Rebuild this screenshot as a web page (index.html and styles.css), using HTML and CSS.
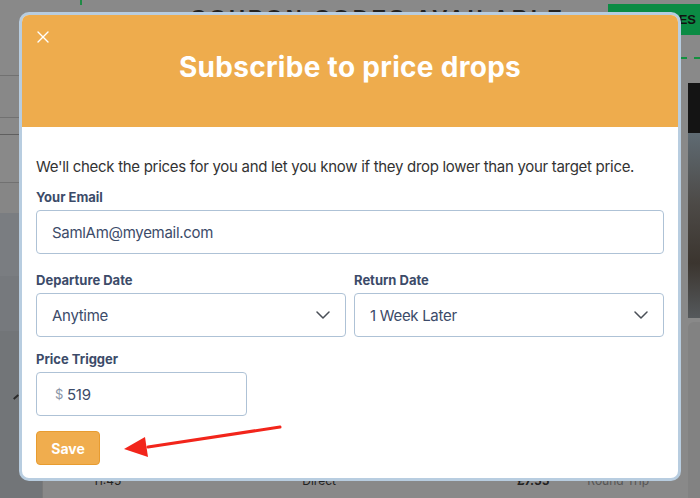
FILE: index.html
```html
<!doctype html>
<html lang="en">
  <head>
    <meta charset="UTF-8" />
    <meta name="viewport" content="width=device-width, initial-scale=1.0" />
    <title>Subscribe to price drops</title>
    <link rel="stylesheet" href="styles.css">
  </head>

  <body>
    <div class="page">
      <header class="topbar">
        <span class="tick"></span>
        <h1 class="promo">COUPON CODES AVAILABLE</h1>
        <a class="deal-btn">SEE PRICES</a>
      </header>
      <div class="content">
        <aside class="side">
          <div class="band b1"></div>
          <div class="band b2"></div>
          <div class="band b3"></div>
          <div class="band b4"><span class="round"></span></div>
          <div class="band b5"></div>
          <div class="band b6"></div>
          <div class="band b7"></div>
          <div class="band b8"><span class="mark"></span></div>
        </aside>
        <main class="results">
          <div class="result-row">
            <span>11:45</span>
            <span class="stops">Direct</span>
            <span class="price">£7.55</span>
            <span class="trip">Round Trip</span>
          </div>
        </main>
        <aside class="photo-col">
          <div class="dash"></div>
          <div class="photo"></div>
          <div class="card"></div>
        </aside>
      </div>
    </div>

    <div class="modal">
      <div class="modal-head">
        <button class="close" aria-label="Close">
          <svg width="12" height="12" viewBox="0 0 12 12" fill="none" stroke="white" stroke-width="1.4" stroke-linecap="round">
            <line x1="1" y1="1" x2="11" y2="11" />
            <line x1="11" y1="1" x2="1" y2="11" />
          </svg>
        </button>
        <h2>Subscribe to price drops</h2>
      </div>
      <form class="modal-body">
        <p class="intro">We'll check the prices for you and let you know if they drop lower than your target price.</p>

        <div class="field email-field">
          <label>Your Email</label>
          <div class="box">SamlAm@myemail.com</div>
        </div>

        <div class="field-row">
          <div class="field">
            <label>Departure Date</label>
            <div class="box select">
              <span>Anytime</span>
              <svg width="14" height="8" viewBox="0 0 14 8" fill="none" stroke="#4a4f57" stroke-width="1.5" stroke-linecap="round" stroke-linejoin="round">
                <polyline points="1 1 7 7 13 1" />
              </svg>
            </div>
          </div>
          <div class="field">
            <label>Return Date</label>
            <div class="box select">
              <span>1 Week Later</span>
              <svg width="14" height="8" viewBox="0 0 14 8" fill="none" stroke="#4a4f57" stroke-width="1.5" stroke-linecap="round" stroke-linejoin="round">
                <polyline points="1 1 7 7 13 1" />
              </svg>
            </div>
          </div>
        </div>

        <div class="field price-field">
          <label>Price Trigger</label>
          <div class="box price-box"><span class="currency">$</span>519</div>
        </div>

        <button type="button" class="save">Save</button>
      </form>
    </div>

    <svg class="arrow" width="170" height="40" viewBox="0 0 170 40">
      <line x1="160" y1="3" x2="28" y2="23" stroke="#f2251b" stroke-width="3" stroke-linecap="round" />
      <polygon points="4,25 25,13 28,33" fill="#f2251b" />
    </svg>
  </body>
</html>
```

FILE: styles.css
```css
:root {
  --orange: #eeac4d;
  --label: #3c4b69;
  --border: #aec2d6;
}

* {
  box-sizing: border-box;
  font-family: Inter, "Liberation Sans", sans-serif;
}

body {
  margin: 0;
  width: 700px;
  height: 498px;
  overflow: hidden;
  background-color: #898989;
}

/* dimmed page behind the modal */
.page {
  height: 498px;
  display: flex;
  flex-direction: column;
}

.topbar {
  height: 36px;
  display: flex;
  align-items: flex-start;
}

.tick {
  width: 2px;
  height: 5px;
  margin-left: 80px;
  background-color: #1f8a45;
}

.promo {
  margin: 7px 0 0 108px;
  font-family: "Liberation Sans", sans-serif;
  font-size: 22px;
  font-weight: 700;
  letter-spacing: 3px;
  color: #222;
  line-height: 22px;
}

.deal-btn {
  margin: 4px 0 0 auto;
  width: 92px;
  height: 31px;
  background-color: #0b8b44;
  color: #111;
  font-family: "Liberation Sans", sans-serif;
  font-weight: 700;
  font-size: 13px;
  display: flex;
  align-items: center;
  justify-content: flex-end;
  padding-right: 4px;
}

.content {
  flex: 1;
  display: grid;
  grid-template-columns: 42px 1fr 19px;
}

.side {
  display: flex;
  flex-direction: column;
  margin-top: -36px;
}

.band {
  border-bottom: 1px solid #717171;
}

.b1 { height: 76px; }
.b2 { height: 42px; background-color: #888; }
.b3 { height: 17px; border-bottom-color: #5f5f5f; }
.b4 { height: 48px; display: flex; align-items: center; justify-content: flex-end; }
.b5 { height: 30px; border: none; background-color: #868686; }
.b6 { height: 63px; border: none; background-color: #7a7d81; }
.b7 { height: 55px; border: none; background-color: #76797d; }
.b8 { flex: 1; border: none; background-color: #727578; position: relative; }

.round {
  width: 22px;
  height: 22px;
  border: 1px solid #6e6e6e;
  border-radius: 50%;
  margin-right: -6px;
}

.mark {
  position: absolute;
  left: 13px;
  top: 65px;
  width: 6px;
  height: 2px;
  background-color: #2a2a2a;
  transform: rotate(-40deg);
}

.results {
  display: flex;
  flex-direction: column;
  justify-content: flex-end;
  border-left: 1px solid #7a7a7a;
  padding-bottom: 11px;
}

.result-row {
  display: flex;
  height: 14px;
  align-items: flex-end;
  font-family: "Liberation Sans", sans-serif;
  font-size: 12px;
  color: #222;
  padding-left: 50px;
  line-height: 12px;
}

.result-row .stops {
  margin-left: 181px;
}

.result-row .price {
  margin-left: 181px;
  font-weight: 700;
}

.result-row .trip {
  margin-left: 38px;
  color: #555;
}

.photo-col {
  display: flex;
  flex-direction: column;
  padding-left: 7px;
}

.dash {
  height: 26px;
  margin-left: -7px;
  border-top: 2px dashed #12913f;
  margin-top: 21px;
}

.photo {
  height: 235px;
  background: linear-gradient(#141414 0 50px, #5f6b73 50px, #4d4a47 120px, #3b352f 180px, #55595c);
}

.card {
  flex: 1;
  margin-top: 4px;
  background-color: #828282;
  border-top-left-radius: 6px;
}

/* modal */
.modal {
  position: absolute;
  left: 19px;
  top: 12px;
  width: 662px;
  height: 469px;
  border: 3px solid #b8cde0;
  border-radius: 10px;
  background-color: white;
  overflow: hidden;
}

.modal-head {
  height: 112px;
  background-color: var(--orange);
  padding-top: 35px;
  position: relative;
}

.modal-head h2 {
  margin: 0;
  text-align: center;
  color: white;
  font-size: 28px;
  line-height: 34px;
  font-weight: 700;
  letter-spacing: 0.3px;
}

.close {
  position: absolute;
  left: 15px;
  top: 16px;
  padding: 0;
  border: none;
  background: none;
  width: 12px;
  height: 12px;
  display: flex;
}

.modal-body {
  padding: 30px 14px 0;
}

.intro {
  margin: 0 0 12px;
  font-size: 15px;
  line-height: 20px;
  letter-spacing: -0.3px;
  color: #333;
}

.field label {
  display: block;
  font-size: 13px;
  line-height: 16px;
  font-weight: 700;
  color: var(--label);
  margin-bottom: 5px;
}

.box {
  height: 44px;
  border: 1px solid var(--border);
  border-radius: 4px;
  display: flex;
  align-items: center;
  padding: 0 15px;
  font-size: 15px;
  letter-spacing: -0.3px;
  color: var(--label);
}

.email-field {
  margin-bottom: 18px;
}

.field-row {
  display: grid;
  grid-template-columns: 1fr 1fr;
  gap: 8px;
  margin-bottom: 14px;
}

.select {
  justify-content: space-between;
}

.price-field {
  width: 211px;
  margin-bottom: 15px;
}

.currency {
  font-size: 13px;
  color: #8a94a6;
  margin: 0 4px 0 3px;
}

.save {
  width: 64px;
  height: 34px;
  border: 1px solid #e89c30;
  border-radius: 4px;
  background-color: #f0ad4e;
  color: white;
  font-size: 14px;
  font-weight: 700;
  padding: 0;
}

.arrow {
  position: absolute;
  left: 120px;
  top: 424px;
}
```
